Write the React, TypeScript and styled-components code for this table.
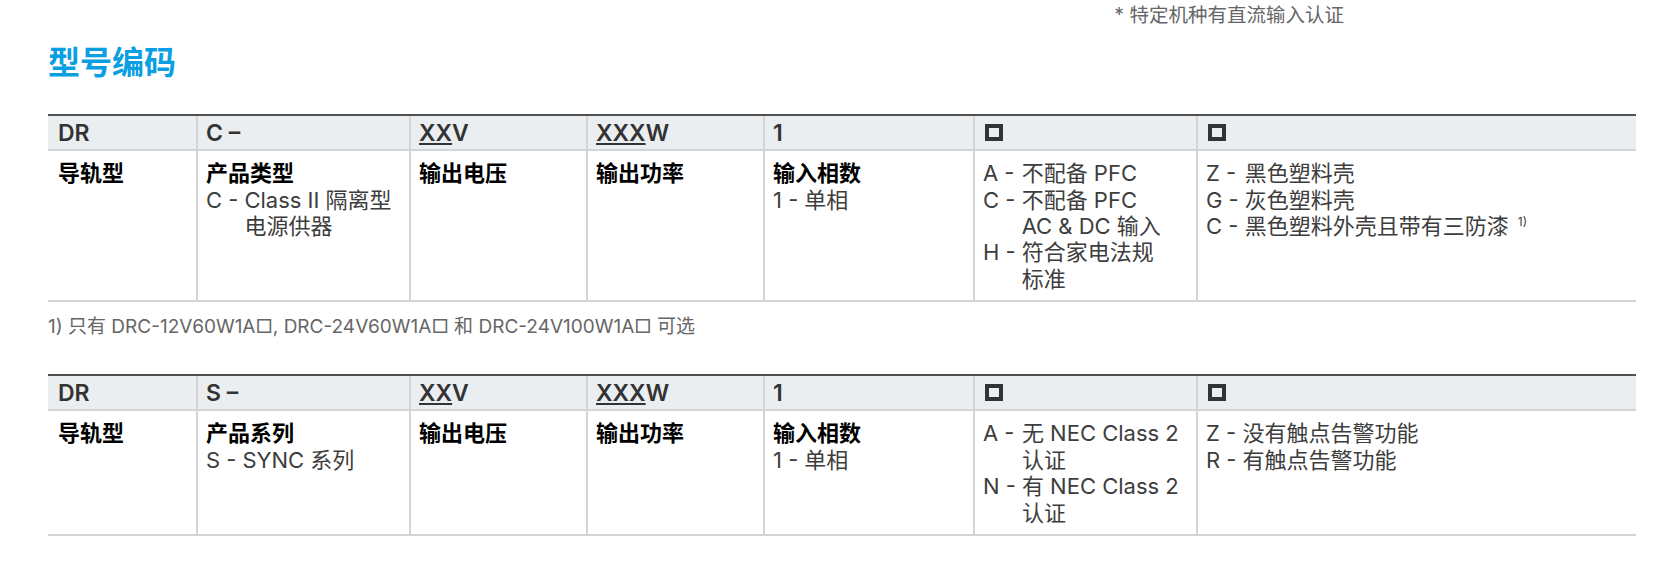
import React from 'react'
import styled, { createGlobalStyle } from 'styled-components'

const GlobalStyle = createGlobalStyle`
  body {
    margin: 0;
    background: #fff;
    font-family: Inter, 'Noto Sans CJK SC', sans-serif;
    color: #3d3d3d;
  }
`

interface Entry {
  code: string
  lines: string[]
  note?: string
}

interface BodyCell {
  label?: string
  entries?: Entry[]
}

interface CodeTable {
  head: React.ReactNode[]
  body: BodyCell[]
}

const Under = styled.span`
  text-decoration: underline;
  text-decoration-thickness: 1.5px;
  text-underline-offset: 2px;
`

const HeadBox = styled.span`
  display: inline-block;
  box-sizing: border-box;
  width: 18px;
  height: 17px;
  margin-left: 2px;
  border: 4px solid #333;
`

const Box = () => <HeadBox aria-label="□" />

const tables: CodeTable[] = [
  {
    head: [
      'DR',
      'C –',
      <><Under>XX</Under>V</>,
      <><Under>XXX</Under>W</>,
      '1',
      <Box />,
      <Box />,
    ],
    body: [
      { label: '导轨型' },
      { label: '产品类型', entries: [{ code: 'C -', lines: ['Class II 隔离型', '电源供器'] }] },
      { label: '输出电压' },
      { label: '输出功率' },
      { label: '输入相数', entries: [{ code: '1 -', lines: ['单相'] }] },
      {
        entries: [
          { code: 'A -', lines: ['不配备 PFC'] },
          { code: 'C -', lines: ['不配备 PFC', 'AC & DC 输入'] },
          { code: 'H -', lines: ['符合家电法规', '标准'] },
        ],
      },
      {
        entries: [
          { code: 'Z -', lines: ['黑色塑料壳'] },
          { code: 'G -', lines: ['灰色塑料壳'] },
          { code: 'C -', lines: ['黑色塑料外壳且带有三防漆'], note: '1)' },
        ],
      },
    ],
  },
  {
    head: [
      'DR',
      'S –',
      <><Under>XX</Under>V</>,
      <><Under>XXX</Under>W</>,
      '1',
      <Box />,
      <Box />,
    ],
    body: [
      { label: '导轨型' },
      { label: '产品系列', entries: [{ code: 'S -', lines: ['SYNC 系列'] }] },
      { label: '输出电压' },
      { label: '输出功率' },
      { label: '输入相数', entries: [{ code: '1 -', lines: ['单相'] }] },
      {
        entries: [
          { code: 'A -', lines: ['无 NEC Class 2', '认证'] },
          { code: 'N -', lines: ['有 NEC Class 2', '认证'] },
        ],
      },
      {
        entries: [
          { code: 'Z -', lines: ['没有触点告警功能'] },
          { code: 'R -', lines: ['有触点告警功能'] },
        ],
      },
    ],
  },
]

const CodeGrid = ({ table }: { table: CodeTable }) => (
  <Table>
    {table.head.map((h, i) => (
      <HeadCell key={`h${i}`} $first={i === 0}>
        {h}
      </HeadCell>
    ))}
    {table.body.map((cell, i) => (
      <Cell key={`b${i}`} $first={i === 0}>
        {cell.label && <Label>{cell.label}</Label>}
        {cell.entries && (
          <Entries>
            {cell.entries.map((e, j) => (
              <React.Fragment key={j}>
                <Code>{e.code}</Code>
                <Desc>
                  {e.lines.map((line, k) => (
                    <div key={k}>
                      {line}
                      {e.note && k === e.lines.length - 1 && <Sup>{e.note}</Sup>}
                    </div>
                  ))}
                </Desc>
              </React.Fragment>
            ))}
          </Entries>
        )}
      </Cell>
    ))}
  </Table>
)

export default function App() {
  return (
    <>
      <GlobalStyle />
      <Page>
        <Note>* 特定机种有直流输入认证</Note>
        <Title>型号编码</Title>
        <CodeGrid table={tables[0]} />
        <Footnote>1) 只有 DRC-12V60W1A□, DRC-24V60W1A□ 和 DRC-24V100W1A□ 可选</Footnote>
        <CodeGrid table={tables[1]} />
      </Page>
    </>
  )
}

const Page = styled.div`
  width: 1588px;
  padding: 4px 0 0 48px;
`

const Note = styled.div`
  display: flex;
  justify-content: flex-end;
  padding-right: 292px;
  font-size: 19.5px;
  line-height: 22.8px;
  color: #666;
`

const Title = styled.h2`
  margin: 17px 0 32px;
  font-size: 32px;
  line-height: 38px;
  font-weight: 700;
  color: #0a9fe2;
`

const Table = styled.div`
  display: grid;
  grid-template-columns: 148px 213px 177px 177px 210px 223px 1fr;
  border-top: 2px solid #505050;
  border-bottom: 2px solid #d4d4d4;
`

const HeadCell = styled.div<{ $first?: boolean }>`
  padding: 4px 8px 3px ${({ $first }) => ($first ? '10px' : '8px')};
  background: #ebeef1;
  border-bottom: 2px solid #d4d4d4;
  border-left: ${({ $first }) => ($first ? 'none' : '2px solid #d4d4d4')};
  font-size: 23px;
  line-height: 26.4px;
  font-weight: 600;
  color: #333;
`

const Cell = styled.div<{ $first?: boolean }>`
  padding: 9px 8px 8px ${({ $first }) => ($first ? '10px' : '8px')};
  border-left: ${({ $first }) => ($first ? 'none' : '2px solid #d4d4d4')};
  font-size: 22px;
  line-height: 26.4px;
`

const Label = styled.div`
  font-weight: 700;
  color: #000;
`

const Entries = styled.div`
  display: grid;
  grid-template-columns: auto 1fr;
  column-gap: 6px;
`

const Code = styled.span`
  white-space: pre;
`

const Desc = styled.div`
  white-space: pre;
`

const Sup = styled.sup`
  margin-left: 9px;
  font-size: 12px;
  line-height: 0;
  vertical-align: 8px;
`

const Footnote = styled.p`
  margin: 14px 0 35px;
  font-size: 19px;
  line-height: 22.8px;
  color: #666;
`
